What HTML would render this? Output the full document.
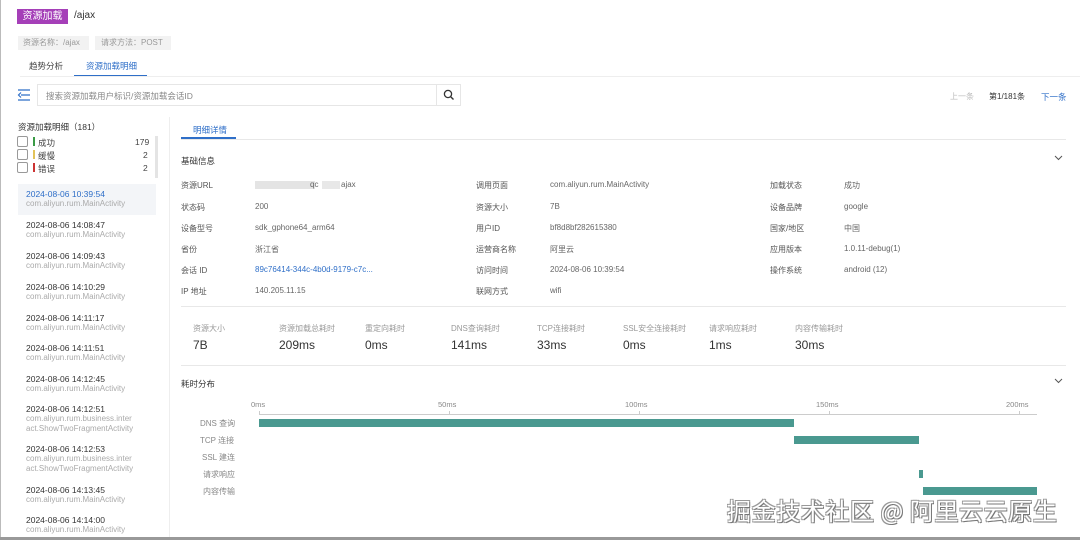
<!DOCTYPE html>
<html><head><meta charset="utf-8"><style>
*{margin:0;padding:0;box-sizing:border-box}
body{width:1080px;height:540px;overflow:hidden;background:#fff;font-family:"Liberation Sans","Noto Sans CJK SC",sans-serif;color:#333;position:relative;font-size:8px}
.a{position:absolute;white-space:nowrap}
.g{color:#888}
.lbl{color:#555;font-size:8px}
.val{color:#666;font-size:8px}
.it .t{font-size:8.5px;color:#333}
.it .s{font-size:8px;color:#aaa;line-height:10px}
.bar{position:absolute;background:#4a9990;height:8px}
</style></head><body>
<div class="a" style="left:0;top:0;width:1px;height:540px;background:#bbb"></div>
<div class="a" style="left:0;top:537px;width:1080px;height:3px;background:#999"></div>

<div class="a" style="left:17px;top:9px;width:51px;height:15px;background:#a53fb8;color:#fff;font-size:10px;line-height:15px;text-align:center">资源加载</div>
<div class="a" style="left:74px;top:10px;font-size:10px;color:#333">/ajax</div>
<div class="a" style="left:18px;top:36px;width:71px;height:14px;background:#f2f2f2;color:#999;font-size:8px;line-height:14px;padding-left:5px">资源名称：/ajax</div>
<div class="a" style="left:95px;top:36px;width:76px;height:14px;background:#f2f2f2;color:#999;font-size:8px;line-height:14px;padding-left:6px">请求方法：POST</div>
<div class="a" style="left:29px;top:60px;font-size:8.5px;color:#444">趋势分析</div>
<div class="a" style="left:86px;top:60px;font-size:8.5px;color:#2f6fc8">资源加载明细</div>
<div class="a" style="left:74px;top:75px;width:73px;height:2px;background:#2f6fc8"></div>
<div class="a" style="left:20px;top:76px;width:1060px;height:1px;background:#eee"></div>

<svg class="a" style="left:17px;top:89px" width="14" height="12" viewBox="0 0 14 12"><path d="M1 1H13M4 6H13M1 11H13M4 3.5L1.5 6L4 8.5" stroke="#2f6fc8" stroke-width="1.2" fill="none"/></svg>
<div class="a" style="left:37px;top:84px;width:424px;height:22px;border:1px solid #e6e6e6"></div>
<div class="a" style="left:436px;top:84px;width:1px;height:22px;background:#e6e6e6"></div>
<div class="a" style="left:46px;top:90px;font-size:8.5px;color:#888">搜索资源加载用户标识/资源加载会话ID</div>
<svg class="a" style="left:443px;top:89px" width="12" height="12" viewBox="0 0 12 12"><circle cx="5" cy="5" r="3.6" stroke="#333" stroke-width="1.3" fill="none"/><path d="M7.7 7.7L10.5 10.5" stroke="#333" stroke-width="1.4"/></svg>
<div class="a" style="left:950px;top:91px;font-size:8px;color:#bbb">上一条</div>
<div class="a" style="left:989px;top:91px;font-size:8px;color:#333">第1/181条</div>
<div class="a" style="left:1041px;top:91px;font-size:8.5px;color:#2f6fc8">下一条</div>

<!-- left -->
<div class="a" style="left:18px;top:121px;font-size:8.5px;color:#333">资源加载明细（181）</div>
<div class="a" style="left:155px;top:136px;width:3px;height:42px;background:#e4e4e4"></div>
<div class="a" style="left:17px;top:136px;width:11px;height:11px;border:1px solid #999;border-radius:2px"></div>
<div class="a" style="left:33px;top:137px;width:2px;height:9px;background:#3a9b46"></div>
<div class="a" style="left:38px;top:137px;font-size:8.5px;color:#444">成功</div>
<div class="a" style="left:135px;top:137px;font-size:8.5px;color:#444">179</div>
<div class="a" style="left:17px;top:149px;width:11px;height:11px;border:1px solid #999;border-radius:2px"></div>
<div class="a" style="left:33px;top:150px;width:2px;height:9px;background:#e2c35a"></div>
<div class="a" style="left:38px;top:150px;font-size:8.5px;color:#444">缓慢</div>
<div class="a" style="left:143px;top:150px;font-size:8.5px;color:#444">2</div>
<div class="a" style="left:17px;top:162px;width:11px;height:11px;border:1px solid #999;border-radius:2px"></div>
<div class="a" style="left:33px;top:163px;width:2px;height:9px;background:#c33"></div>
<div class="a" style="left:38px;top:163px;font-size:8.5px;color:#444">错误</div>
<div class="a" style="left:143px;top:163px;font-size:8.5px;color:#444">2</div>

<div class="a" style="left:18px;top:184px;width:138px;height:31px;background:#f3f5f8"></div>
<div class="a it" style="left:26px;top:189px"><div class="t" style="color:#2f6fc8">2024-08-06 10:39:54</div><div class="s">com.aliyun.rum.MainActivity</div></div>
<div class="a it" style="left:26px;top:220px"><div class="t">2024-08-06 14:08:47</div><div class="s">com.aliyun.rum.MainActivity</div></div>
<div class="a it" style="left:26px;top:251px"><div class="t">2024-08-06 14:09:43</div><div class="s">com.aliyun.rum.MainActivity</div></div>
<div class="a it" style="left:26px;top:282px"><div class="t">2024-08-06 14:10:29</div><div class="s">com.aliyun.rum.MainActivity</div></div>
<div class="a it" style="left:26px;top:313px"><div class="t">2024-08-06 14:11:17</div><div class="s">com.aliyun.rum.MainActivity</div></div>
<div class="a it" style="left:26px;top:343px"><div class="t">2024-08-06 14:11:51</div><div class="s">com.aliyun.rum.MainActivity</div></div>
<div class="a it" style="left:26px;top:374px"><div class="t">2024-08-06 14:12:45</div><div class="s">com.aliyun.rum.MainActivity</div></div>
<div class="a it" style="left:26px;top:404px"><div class="t">2024-08-06 14:12:51</div><div class="s">com.aliyun.rum.business.inter<br>act.ShowTwoFragmentActivity</div></div>
<div class="a it" style="left:26px;top:444px"><div class="t">2024-08-06 14:12:53</div><div class="s">com.aliyun.rum.business.inter<br>act.ShowTwoFragmentActivity</div></div>
<div class="a it" style="left:26px;top:485px"><div class="t">2024-08-06 14:13:45</div><div class="s">com.aliyun.rum.MainActivity</div></div>
<div class="a it" style="left:26px;top:515px"><div class="t">2024-08-06 14:14:00</div><div class="s">com.aliyun.rum.MainActivity</div></div>
<div class="a" style="left:169px;top:117px;width:1px;height:420px;background:#eee"></div>

<!-- right -->
<div class="a" style="left:193px;top:124px;font-size:8.5px;color:#2f6fc8">明细详情</div>
<div class="a" style="left:181px;top:137px;width:55px;height:2px;background:#2f6fc8"></div>
<div class="a" style="left:181px;top:139px;width:885px;height:1px;background:#e8e8e8"></div>
<div class="a" style="left:181px;top:155px;font-size:8.5px;color:#333">基础信息</div>
<svg class="a" style="left:1054px;top:155px" width="9" height="6" viewBox="0 0 9 6"><path d="M1 1L4.5 4.5L8 1" stroke="#555" fill="none"/></svg>

<div class="a lbl" style="left:181px;top:180px">资源URL</div>
<div class="a" style="left:255px;top:181px;width:60px;height:8px;background:#e4e4e4"></div>
<div class="a val" style="left:310px;top:180px">qc</div>
<div class="a" style="left:322px;top:181px;width:18px;height:8px;background:#e8e8e8"></div>
<div class="a val" style="left:341px;top:180px">ajax</div>
<div class="a lbl" style="left:181px;top:202px">状态码</div><div class="a val" style="left:255px;top:202px">200</div>
<div class="a lbl" style="left:181px;top:223px">设备型号</div><div class="a val" style="left:255px;top:223px">sdk_gphone64_arm64</div>
<div class="a lbl" style="left:181px;top:244px">省份</div><div class="a val" style="left:255px;top:244px">浙江省</div>
<div class="a lbl" style="left:181px;top:265px">会话 ID</div><div class="a val" style="left:255px;top:265px;color:#2f6fc8">89c76414-344c-4b0d-9179-c7c...</div>
<div class="a lbl" style="left:181px;top:286px">IP 地址</div><div class="a val" style="left:255px;top:286px">140.205.11.15</div>

<div class="a lbl" style="left:476px;top:180px">调用页面</div><div class="a val" style="left:550px;top:180px">com.aliyun.rum.MainActivity</div>
<div class="a lbl" style="left:476px;top:202px">资源大小</div><div class="a val" style="left:550px;top:202px">7B</div>
<div class="a lbl" style="left:476px;top:223px">用户ID</div><div class="a val" style="left:550px;top:223px">bf8d8bf282615380</div>
<div class="a lbl" style="left:476px;top:244px">运营商名称</div><div class="a val" style="left:550px;top:244px">阿里云</div>
<div class="a lbl" style="left:476px;top:265px">访问时间</div><div class="a val" style="left:550px;top:265px">2024-08-06 10:39:54</div>
<div class="a lbl" style="left:476px;top:286px">联网方式</div><div class="a val" style="left:550px;top:286px">wifi</div>

<div class="a lbl" style="left:770px;top:180px">加载状态</div><div class="a val" style="left:844px;top:180px">成功</div>
<div class="a lbl" style="left:770px;top:202px">设备品牌</div><div class="a val" style="left:844px;top:202px">google</div>
<div class="a lbl" style="left:770px;top:223px">国家/地区</div><div class="a val" style="left:844px;top:223px">中国</div>
<div class="a lbl" style="left:770px;top:244px">应用版本</div><div class="a val" style="left:844px;top:244px">1.0.11-debug(1)</div>
<div class="a lbl" style="left:770px;top:265px">操作系统</div><div class="a val" style="left:844px;top:265px">android (12)</div>

<div class="a" style="left:181px;top:306px;width:885px;height:1px;background:#e8e8e8"></div>

<div class="a" style="left:193px;top:323px;font-size:8px;color:#999">资源大小</div><div class="a" style="left:193px;top:338px;font-size:12px;color:#333">7B</div>
<div class="a" style="left:279px;top:323px;font-size:8px;color:#999">资源加载总耗时</div><div class="a" style="left:279px;top:338px;font-size:12px;color:#333">209ms</div>
<div class="a" style="left:365px;top:323px;font-size:8px;color:#999">重定向耗时</div><div class="a" style="left:365px;top:338px;font-size:12px;color:#333">0ms</div>
<div class="a" style="left:451px;top:323px;font-size:8px;color:#999">DNS查询耗时</div><div class="a" style="left:451px;top:338px;font-size:12px;color:#333">141ms</div>
<div class="a" style="left:537px;top:323px;font-size:8px;color:#999">TCP连接耗时</div><div class="a" style="left:537px;top:338px;font-size:12px;color:#333">33ms</div>
<div class="a" style="left:623px;top:323px;font-size:8px;color:#999">SSL安全连接耗时</div><div class="a" style="left:623px;top:338px;font-size:12px;color:#333">0ms</div>
<div class="a" style="left:709px;top:323px;font-size:8px;color:#999">请求响应耗时</div><div class="a" style="left:709px;top:338px;font-size:12px;color:#333">1ms</div>
<div class="a" style="left:795px;top:323px;font-size:8px;color:#999">内容传输耗时</div><div class="a" style="left:795px;top:338px;font-size:12px;color:#333">30ms</div>

<div class="a" style="left:181px;top:365px;width:885px;height:1px;background:#e8e8e8"></div>
<div class="a" style="left:181px;top:378px;font-size:8.5px;color:#333">耗时分布</div>
<svg class="a" style="left:1054px;top:378px" width="9" height="6" viewBox="0 0 9 6"><path d="M1 1L4.5 4.5L8 1" stroke="#555" fill="none"/></svg>

<div class="a g" style="left:251px;top:400px;font-size:7.5px">0ms</div>
<div class="a g" style="left:438px;top:400px;font-size:7.5px">50ms</div>
<div class="a g" style="left:625px;top:400px;font-size:7.5px">100ms</div>
<div class="a g" style="left:816px;top:400px;font-size:7.5px">150ms</div>
<div class="a g" style="left:1006px;top:400px;font-size:7.5px">200ms</div>
<div class="a" style="left:259px;top:414px;width:778px;height:1px;background:#ccc"></div>
<div class="a" style="left:259px;top:411px;width:1px;height:3px;background:#ccc"></div>
<div class="a" style="left:449px;top:411px;width:1px;height:3px;background:#ccc"></div>
<div class="a" style="left:639px;top:411px;width:1px;height:3px;background:#ccc"></div>
<div class="a" style="left:829px;top:411px;width:1px;height:3px;background:#ccc"></div>
<div class="a" style="left:1019px;top:411px;width:1px;height:3px;background:#ccc"></div>

<div class="a g" style="left:200px;top:418px;font-size:8px">DNS 查询</div>
<div class="a g" style="left:200px;top:435px;font-size:8px">TCP 连接</div>
<div class="a g" style="left:202px;top:452px;font-size:8px">SSL 建连</div>
<div class="a g" style="left:203px;top:469px;font-size:8px">请求响应</div>
<div class="a g" style="left:203px;top:486px;font-size:8px">内容传输</div>
<div class="bar" style="left:259px;top:419px;width:535px"></div>
<div class="bar" style="left:794px;top:436px;width:125px"></div>
<div class="bar" style="left:919px;top:470px;width:4px"></div>
<div class="bar" style="left:923px;top:487px;width:114px"></div>

<div class="a" style="left:727px;top:492px;font-size:24px;letter-spacing:0.6px;color:#fff;font-family:'Noto Sans CJK SC',sans-serif;text-shadow:1px 1px 0 #777,-1px -1px 0 #999,1px -1px 0 #999,-1px 1px 0 #999">掘金技术社区 @ 阿里云云原生</div>
</body></html>
